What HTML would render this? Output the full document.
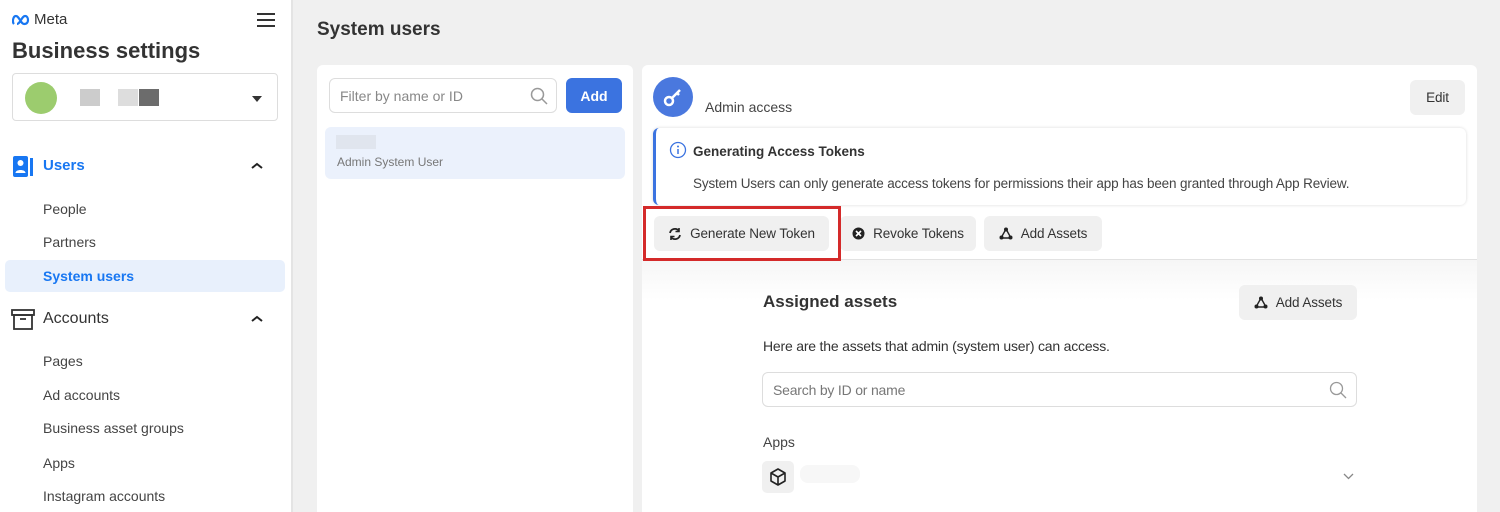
<!DOCTYPE html>
<html><head><meta charset="utf-8"><style>
*{box-sizing:border-box;margin:0;padding:0}
html,body{width:1500px;height:512px;overflow:hidden}
body{background:#f0f0f0;font-family:"Liberation Sans",Arial,sans-serif;color:#1c1e21;position:relative}
.a{position:absolute}
.side{left:0;top:0;width:293px;height:512px;background:#fff;border-right:2px solid #e4e4e4}
.nav{position:absolute;left:43px;font-size:14px;color:#444;line-height:16px}
.card{background:#fff;border-radius:6px}
.btn{position:absolute;background:#f0f0f0;border-radius:6px;font-size:13.5px;color:#333;display:flex;align-items:center;justify-content:center;gap:8px;letter-spacing:-0.1px}
</style></head><body>
<div class="a side">
  <div class="a" style="left:12px;top:11px;display:flex;align-items:center;gap:3px">
    <svg width="19" height="12" viewBox="0 0 19 12"><path d="M2 10C0 8 1 2 4 2c3 0 5 8 8 8s4-2 4-4-1-4-3-4c-3 0-5 8-8 8" fill="none" stroke="#1877f2" stroke-width="2.2"/></svg>
    <span style="font-size:15px;color:#333">Meta</span>
  </div>
  <div class="a" style="left:257px;top:13px;width:18px;height:2px;background:#333;box-shadow:0 6px 0 #333,0 12px 0 #333"></div>
  <div class="a" style="left:12px;top:38px;font-size:22px;font-weight:bold;color:#333">Business settings</div>
  <div class="a" style="left:12px;top:73px;width:266px;height:48px;border:1px solid #ddd;border-radius:4px">
    <div class="a" style="left:12px;top:8px;width:32px;height:32px;border-radius:50%;background:#9ccc6e"></div>
    <div class="a" style="left:67px;top:15px;width:20px;height:17px;background:#ccc"></div>
    <div class="a" style="left:105px;top:15px;width:20px;height:17px;background:#ddd"></div>
    <div class="a" style="left:126px;top:15px;width:20px;height:17px;background:#6c6c6c"></div>
    <div class="a" style="left:239px;top:22px;border:5px solid transparent;border-top:6px solid #333"></div>
  </div>
  <svg class="a" style="left:12px;top:155px" width="24" height="24" viewBox="0 0 24 24"><rect x="1" y="1" width="15" height="21" rx="2" fill="#1877f2"/><circle cx="8.5" cy="8" r="3" fill="#fff"/><path d="M3.5 18c0-4 10-4 10 0z" fill="#fff"/><path d="M18 3h3v18h-3z" fill="#1877f2"/></svg>
  <div class="a" style="left:43px;top:157px;font-size:15px;font-weight:bold;color:#1877f2">Users</div>
  <svg class="a" style="left:251px;top:162px" width="12" height="8"><path d="M1 6l5-4 5 4" fill="none" stroke="#222" stroke-width="2"/></svg>
  <div class="nav" style="top:201px">People</div>
  <div class="nav" style="top:234px">Partners</div>
  <div class="a" style="left:5px;top:260px;width:280px;height:32px;background:#e8f0fc;border-radius:5px"></div>
  <div class="nav" style="top:268px;color:#1877f2;font-weight:bold">System users</div>
  <svg class="a" style="left:11px;top:309px" width="24" height="22" viewBox="0 0 24 22"><rect x="1" y="1" width="22" height="5" fill="none" stroke="#333" stroke-width="1.8"/><rect x="3" y="6" width="18" height="14" fill="none" stroke="#333" stroke-width="1.8"/><path d="M9 10h6" stroke="#333" stroke-width="1.8"/></svg>
  <div class="a" style="left:43px;top:310px;font-size:16px;color:#333">Accounts</div>
  <svg class="a" style="left:251px;top:315px" width="12" height="8"><path d="M1 6l5-4 5 4" fill="none" stroke="#222" stroke-width="2"/></svg>
  <div class="nav" style="top:353px">Pages</div>
  <div class="nav" style="top:387px">Ad accounts</div>
  <div class="nav" style="top:420px">Business asset groups</div>
  <div class="nav" style="top:455px">Apps</div>
  <div class="nav" style="top:488px">Instagram accounts</div>
</div>

<div class="a" style="left:317px;top:19px;font-size:19px;font-weight:bold;color:#333">System users</div>

<div class="a card" style="left:317px;top:65px;width:316px;height:447px;border-radius:6px 6px 0 0">
  <div class="a" style="left:12px;top:13px;width:228px;height:35px;border:1px solid #ddd;border-radius:6px">
    <div class="a" style="left:10px;top:9px;font-size:14px;color:#888">Filter by name or ID</div>
    <svg class="a" style="left:200px;top:8px" width="18" height="18"><circle cx="7.5" cy="7.5" r="6" fill="none" stroke="#999" stroke-width="1.5"/><path d="M12 12l5 5" stroke="#999" stroke-width="1.5"/></svg>
  </div>
  <div class="a" style="left:249px;top:13px;width:56px;height:35px;background:#3b73e0;border-radius:6px;color:#fff;font-weight:bold;font-size:14px;display:flex;align-items:center;justify-content:center">Add</div>
  <div class="a" style="left:8px;top:62px;width:300px;height:52px;background:#ebf1fc;border-radius:6px">
    <div class="a" style="left:11px;top:8px;width:40px;height:14px;background:#e0e5ee"></div>
    <div class="a" style="left:12px;top:28px;font-size:12px;color:#777">Admin System User</div>
  </div>
</div>

<div class="a card" style="left:642px;top:65px;width:835px;height:447px;overflow:hidden;border-radius:6px 6px 0 0">
  <div class="a" style="left:0;top:194px;width:835px;height:266px;background:linear-gradient(#f6f6f6,#fff 40px);border-top:1px solid #e2e2e2"></div>
  <div class="a" style="left:11px;top:12px;width:40px;height:40px;border-radius:50%;background:#4a78de"></div>
  <svg class="a" style="left:21px;top:22px" width="20" height="20" viewBox="0 0 20 20"><circle cx="6" cy="14" r="4" fill="none" stroke="#fff" stroke-width="2.5"/><path d="M9 11l8-8M14 6l2 2" stroke="#fff" stroke-width="2.5"/></svg>
  <div class="a" style="left:63px;top:34px;font-size:14px;color:#444">Admin access</div>
  <div class="btn" style="left:768px;top:15px;width:55px;height:35px">Edit</div>
  <div class="a" style="left:11px;top:63px;width:813px;height:77px;border-left:3px solid #3b73e0;border-radius:6px;box-shadow:0 0 3px rgba(0,0,0,.15)">
    <svg class="a" style="left:13px;top:13px" width="18" height="18"><circle cx="9" cy="9" r="7.5" fill="none" stroke="#3b73e0" stroke-width="1.3"/><path d="M9 8v5" stroke="#3b73e0" stroke-width="1.5"/><circle cx="9" cy="5.5" r="1" fill="#3b73e0"/></svg>
    <div class="a" style="left:37px;top:16px;font-size:13.5px;font-weight:bold;color:#333">Generating Access Tokens</div>
    <div class="a" style="left:37px;top:48px;font-size:13.5px;color:#444;letter-spacing:-0.15px">System Users can only generate access tokens for permissions their app has been granted through App Review.</div>
  </div>
  <div class="btn" style="left:12px;top:151px;width:175px;height:35px"><svg width="14" height="14" viewBox="0 0 14 14"><path d="M2 6a5 5 0 0 1 9-2M12 8a5 5 0 0 1-9 2" fill="none" stroke="#222" stroke-width="1.8"/><path d="M11 1v3.5H7.5M3 13V9.5h3.5" fill="none" stroke="#222" stroke-width="1.6"/></svg>Generate New Token</div>
  <div class="btn" style="left:198px;top:151px;width:136px;height:35px"><svg width="13" height="13"><circle cx="6.5" cy="6.5" r="6" fill="#222"/><path d="M4 4l5 5M9 4l-5 5" stroke="#fff" stroke-width="1.6"/></svg>Revoke Tokens</div>
  <div class="btn" style="left:342px;top:151px;width:118px;height:35px"><svg width="14" height="13"><path d="M7 2L2 11h10z" fill="none" stroke="#222" stroke-width="1.4"/><circle cx="7" cy="2.5" r="2" fill="#222"/><circle cx="2.5" cy="10.5" r="2" fill="#222"/><circle cx="11.5" cy="10.5" r="2" fill="#222"/></svg>Add Assets</div>
  <div class="a" style="left:1px;top:141px;width:198px;height:55px;border:3px solid #d42a2a"></div>

  <div class="a" style="left:121px;top:227px;font-size:17px;font-weight:bold;color:#333">Assigned assets</div>
  <div class="btn" style="left:597px;top:220px;width:118px;height:35px"><svg width="14" height="13"><path d="M7 2L2 11h10z" fill="none" stroke="#222" stroke-width="1.4"/><circle cx="7" cy="2.5" r="2" fill="#222"/><circle cx="2.5" cy="10.5" r="2" fill="#222"/><circle cx="11.5" cy="10.5" r="2" fill="#222"/></svg>Add Assets</div>
  <div class="a" style="left:121px;top:273px;font-size:14px;color:#333;letter-spacing:-0.2px">Here are the assets that admin (system user) can access.</div>
  <div class="a" style="left:120px;top:307px;width:595px;height:35px;border:1px solid #ddd;border-radius:6px;background:#fff">
    <div class="a" style="left:10px;top:9px;font-size:14px;color:#777;letter-spacing:-0.2px">Search by ID or name</div>
    <svg class="a" style="left:566px;top:8px" width="18" height="18"><circle cx="7.5" cy="7.5" r="6" fill="none" stroke="#999" stroke-width="1.3"/><path d="M12 12l5 5" stroke="#999" stroke-width="1.3"/></svg>
  </div>
  <div class="a" style="left:121px;top:369px;font-size:14px;color:#444">Apps</div>
  <div class="a" style="left:120px;top:396px;width:32px;height:32px;background:#f0f0f0;border-radius:5px"></div>
  <svg class="a" style="left:126px;top:402px" width="20" height="20" viewBox="0 0 20 20"><path d="M10 2l7 4v8l-7 4-7-4V6zM3 6l7 4 7-4M10 10v8" fill="none" stroke="#222" stroke-width="1.6" stroke-linejoin="round"/></svg>
  <div class="a" style="left:158px;top:400px;width:60px;height:18px;background:#f7f7f7;border-radius:8px"></div>
  <svg class="a" style="left:701px;top:408px" width="11" height="7"><path d="M1 1l4.5 4.5L10 1" fill="none" stroke="#888" stroke-width="1.3"/></svg>
</div>
</body></html>
